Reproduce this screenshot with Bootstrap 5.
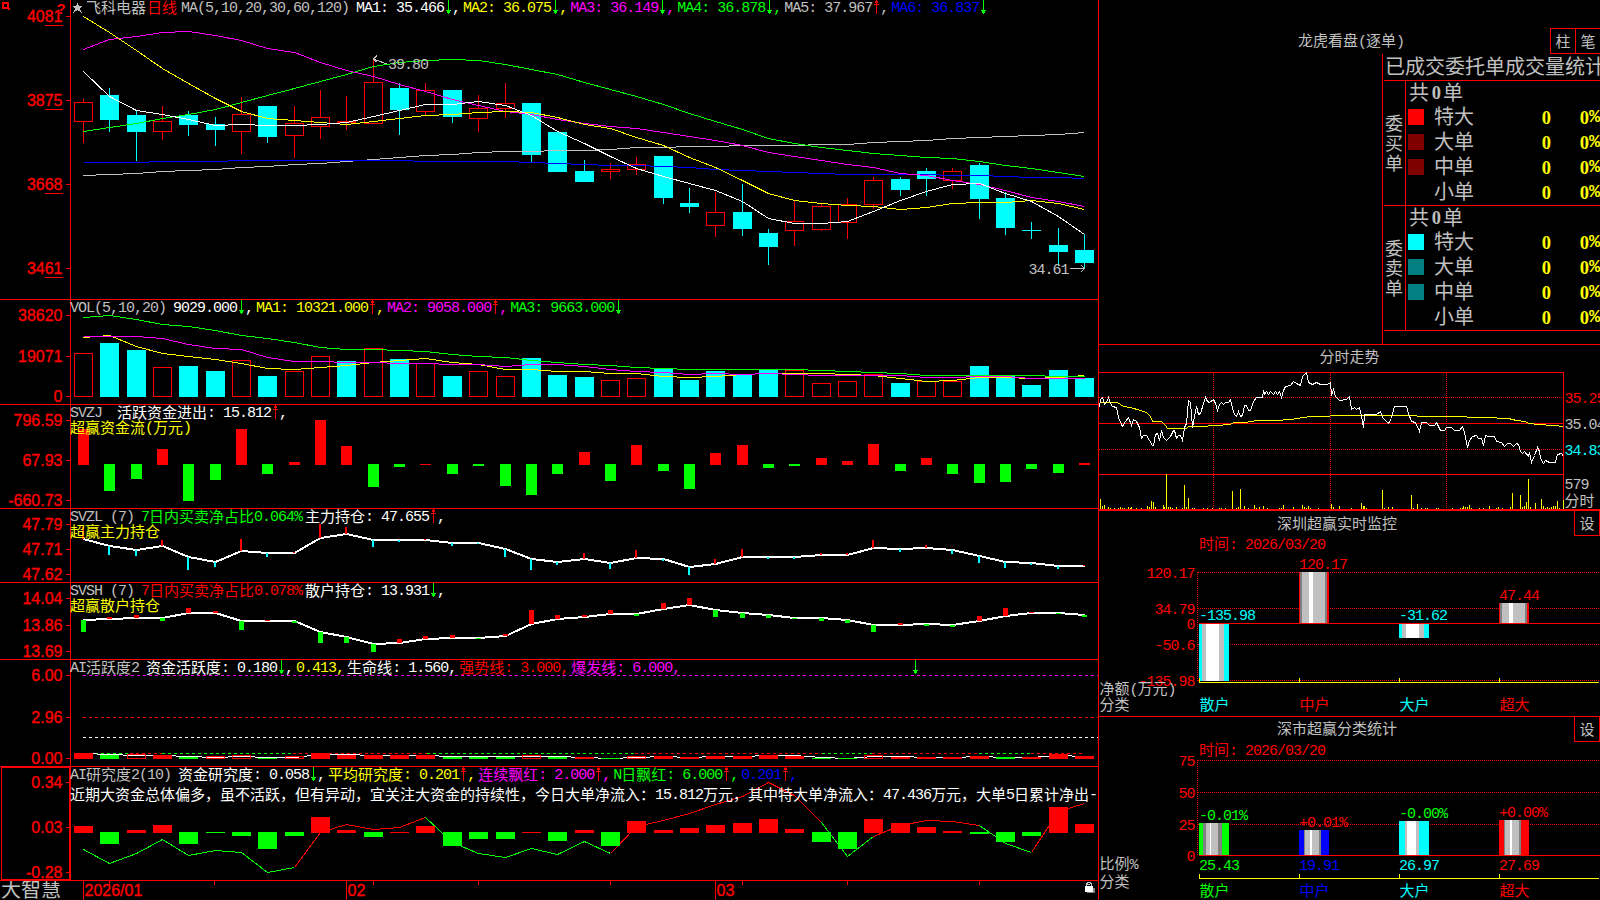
<!DOCTYPE html>
<html lang="zh-CN">
<head>
    <meta charset="UTF-8">
    <title>飞科电器 日线 - 大智慧</title>
    <link href="https://cdn.jsdelivr.net/npm/bootstrap@5.3.2/dist/css/bootstrap.min.css" rel="stylesheet">

    <style>
        :root {
            --r: #ff0000;
            --gy: #c0c0c0;
        }
        body {
            width: 1600px;
            height: 900px;
            overflow: hidden;
            background: #000;
            color: var(--gy);
            font: 15px/15px "Liberation Mono", "Noto Sans CJK SC", monospace;
            letter-spacing: -1px;
        }
        svg { display: block; overflow: hidden; shape-rendering: crispEdges; }
        svg text { white-space: pre; }
        .zh { font-family: "Noto Sans CJK SC", sans-serif; font-weight: 400; letter-spacing: 0; }
        .left-col { width: 1099px; border-right: 1px solid var(--r); }
        .right-col { width: 501px; }
        .pane { border-bottom: 1px solid var(--r); }
        .pane > svg { width: 100%; height: 100%; }

        /* alturas de cada panel */
        .h-k { height: 300px; }
        .h-vol { height: 105px; }
        .h-zj { height: 104px; }
        .h-zl { height: 74px; }
        .h-sh { height: 77px; }
        .h-act { height: 107px; }
        .h-res { height: 114px; }
        .h-date { height: 19px; }
        .h-order { height: 345px; }
        .h-tick { height: 166px; border-bottom-width: 2px; }
        .h-mon { height: 206px; }
        .h-stat { height: 183px; border-bottom: 0; }

        .legend { left: 70px; top: 1px; height: 15px; white-space: pre; }
        .legend.second { top: 16px; }
        .legend.note { top: 21px; width: 1027px; overflow-x: clip; overflow-y: visible; }
        .legend > span { display: flex; margin-right: 3px; height: 15px; line-height: 15px; }
        .legend > .ttl { margin-right: 7px; }
        .legend .zh, .box-btn .zh { line-height: 15px; margin-top: -2px; }
        .arw { width: 8px; height: 15px; flex: none; margin-top: -1px; }
        .star { margin: -1px 3px 0 2px; flex: none; }

        .c-w { color: #fff; }
        .c-y { color: #ff0; }
        .c-m { color: #f0f; }
        .c-g { color: #0f0; }
        .c-b { color: #00f; }
        .c-r { color: #f00; }
        .c-gy { color: var(--gy); }

        .ax { font: 16px "Liberation Sans", sans-serif; letter-spacing: 0; fill: #f00; stroke: #f00; stroke-width: .35px; }

        .box-btn { width: 26px; height: 25px; border: 1px solid var(--r); border-top: 0; }

        .order-head { height: 54px; }
        .order-head .caption-txt { margin-left: 199px; padding-bottom: 4px; width: 252px; }
        .order-head .box-btn { height: 26px; border-top: 1px solid var(--r); border-right: 0; width: 25px; }
        .order-body { margin-left: 283px; border-left: 1px solid var(--r); padding-left: 1px; }
        .order-body .zh { font-size: 20px; letter-spacing: 0; margin-top: -4px; }
        .order-title { height: 26px; padding-left: 1px; white-space: nowrap; overflow-x: clip; }
        .order-block { height: 125px; border-top: 1px solid var(--r); }
        .side-lbl { width: 21px; padding-bottom: 3px; }
        .side-lbl .zh { font-size: 18px; line-height: 20px; display: block; width: 20px; margin-top: 0; }
        .order-rows { border-left: 1px solid var(--r); padding-left: 2px; }
        .order-row { height: 25px; }
        .order-row.sum { height: 24px; padding-left: 1px; }
        .swatch { width: 16px; height: 16px; margin: -2px 10px 0 0; }
        .order-row .dig { font: bold 18.5px/20px "Liberation Serif", serif; letter-spacing: 0; }
        .order-row .sum-n { width: 14px; text-align: right; padding-right: 2px; }
        .order-row .name { width: 92px; }
        .order-row .num { width: 25px; text-align: right; color: #ff0; }
        .order-row .pct { width: 38px; text-align: right; color: #ff0; }
        .order-row .sign { font-size: 18.5px; line-height: 20px; color: #ff0; font-weight: 700; letter-spacing: 0; }
    </style>
</head>
<body class="d-flex">

<svg width="0" height="0" class="position-absolute">
    <defs>
        <symbol id="dn" viewBox="0 0 8 15"><path d="M4.5 0V14M2 10.5H7M3 11.5H6M3 12.5H6" stroke="#0f0" fill="none"/></symbol>
        <symbol id="up" viewBox="0 0 8 15"><path d="M4.5 0V14M3 1.5H6M3 2.5H6M2 4.5H7" stroke="#f00" fill="none"/></symbol>
    </defs>
</svg>

<!-- Columna izquierda: K线 e indicadores -->
<div class="left-col d-flex flex-column">
    <section class="pane h-k position-relative">
        <svg id="kline" viewBox="0 0 1098 299"></svg>
        <div class="legend position-absolute d-flex">
            <span class="mix"><svg class="star" width="11" height="15" viewBox="0 0 11 15"><path d="M5.500 2.500L7 6L11 6L8 8.500L9.500 12.500L5.500 10L1.500 12.500L3 8.500L0 6L4 6Z" fill="#c0c0c0"/></svg>飞科电器</span>
            <span class="mix c-r" style="margin-left:-2px;margin-right:4px">日线</span>
            <span class="mix ttl">MA(5,10,20,30,60,120)</span>
            <span class="mix c-w">MA1: 35.466<svg class="arw"><use href="#dn"/></svg>,</span>
            <span class="mix c-y">MA2: 36.075<svg class="arw"><use href="#dn"/></svg>,</span>
            <span class="mix c-m">MA3: 36.149<svg class="arw"><use href="#dn"/></svg>,</span>
            <span class="mix c-g">MA4: 36.878<svg class="arw"><use href="#dn"/></svg>,</span>
            <span class="mix c-gy">MA5: 37.967<svg class="arw"><use href="#up"/></svg>,</span>
            <span class="mix c-b">MA6: 36.837<svg class="arw"><use href="#dn"/></svg></span>
        </div>
    </section>
    <section class="pane h-vol position-relative">
        <svg id="vol" viewBox="0 300 1098 104"></svg>
        <div class="legend position-absolute d-flex">
            <span class="mix ttl">VOL(5,10,20)</span>
            <span class="mix c-w">9029.000<svg class="arw"><use href="#dn"/></svg>,</span>
            <span class="mix c-y">MA1: 10321.000<svg class="arw"><use href="#up"/></svg>,</span>
            <span class="mix c-m">MA2: 9058.000<svg class="arw"><use href="#up"/></svg>,</span>
            <span class="mix c-g">MA3: 9663.000<svg class="arw"><use href="#dn"/></svg></span>
        </div>
    </section>
    <section class="pane h-zj position-relative">
        <svg id="zj" viewBox="0 405 1098 103"></svg>
        <div class="legend position-absolute d-flex">
            <span class="mix ttl">SVZJ </span>
            <span class="mix c-w">活跃资金进出: 15.812<svg class="arw"><use href="#up"/></svg>,</span>
        </div>
        <div class="legend second position-absolute d-flex"><span class="mix c-y">超赢资金流(万元)</span></div>
    </section>
    <section class="pane h-zl position-relative">
        <svg id="zl" viewBox="0 509 1098 73"></svg>
        <div class="legend position-absolute d-flex">
            <span class="mix ttl">SVZL (7)</span>
            <span class="mix c-g">7日内买卖净占比0.064%</span>
            <span class="mix c-w">主力持仓: 47.655<svg class="arw"><use href="#up"/></svg>,</span>
        </div>
        <div class="legend second position-absolute d-flex"><span class="mix c-y">超赢主力持仓</span></div>
    </section>
    <section class="pane h-sh position-relative">
        <svg id="sh" viewBox="0 583 1098 76"></svg>
        <div class="legend position-absolute d-flex">
            <span class="mix ttl">SVSH (7)</span>
            <span class="mix c-r">7日内买卖净占比0.078%</span>
            <span class="mix c-w">散户持仓: 13.931<svg class="arw"><use href="#dn"/></svg>,</span>
        </div>
        <div class="legend second position-absolute d-flex"><span class="mix c-y">超赢散户持仓</span></div>
    </section>
    <section class="pane h-act position-relative">
        <svg id="act" viewBox="0 660 1098 106"></svg>
        <div class="legend position-absolute d-flex">
            <span class="mix ttl">AI活跃度2</span>
            <span class="mix c-w">资金活跃度: 0.180<svg class="arw"><use href="#dn"/></svg>,</span>
            <span class="mix c-y">0.413,</span>
            <span class="mix c-w">生命线: 1.560,</span>
            <span class="mix c-r">强势线: 3.000,</span>
            <span class="mix c-m">爆发线: 6.000,</span>
        </div>
    </section>
    <section class="pane h-res position-relative">
        <svg id="res" viewBox="0 767 1098 113"></svg>
        <div class="legend position-absolute d-flex">
            <span class="mix ttl">AI研究度2(10)</span>
            <span class="mix c-w">资金研究度: 0.058<svg class="arw"><use href="#dn"/></svg>,</span>
            <span class="mix c-y">平均研究度: 0.201<svg class="arw"><use href="#up"/></svg>,</span>
            <span class="mix c-m">连续飘红: 2.000<svg class="arw"><use href="#up"/></svg>,</span>
            <span class="mix c-g">N日飘红: 6.000<svg class="arw"><use href="#up"/></svg>,</span>
            <span class="mix c-b">0.201<svg class="arw"><use href="#up"/></svg>,</span>
        </div>
        <div class="legend note position-absolute d-flex"><span class="mix c-w">近期大资金总体偏多，虽不活跃，但有异动，宜关注大资金的持续性，今日大单净流入：15.812万元，其中特大单净流入：47.436万元，大单5日累计净出-</span></div>
    </section>
    <svg id="dates" class="h-date" width="1098" viewBox="0 881 1098 19"></svg>
</div>

<!-- Columna derecha -->
<div class="right-col d-flex flex-column">
    <section class="pane h-order d-flex flex-column">
        <div class="order-head d-flex align-items-end">
            <div class="caption-txt mix">龙虎看盘(逐单)</div>
            <div class="box-btn mix d-flex align-items-center justify-content-center">柱</div>
            <div class="box-btn mix d-flex align-items-center justify-content-center">笔</div>
        </div>
        <div class="order-body flex-grow-1 d-flex flex-column">
            <div class="order-title mix d-flex align-items-center">已成交委托单成交量统计</div>
            <div id="orders"></div>
            <div class="border-top border-danger" style="border-color:#f00!important"></div>
        </div>
    </section>
    <section class="pane h-tick">
        <svg id="tick" viewBox="1099 345 501 164"></svg>
    </section>
    <section class="pane h-mon position-relative">
        <svg id="mon" viewBox="1099 511 501 205"></svg>
        <div class="box-btn mix position-absolute top-0 end-0 d-flex align-items-center justify-content-center">设</div>
    </section>
    <section class="pane h-stat position-relative">
        <svg id="stat" viewBox="1099 717 501 183"></svg>
        <div class="box-btn mix position-absolute top-0 end-0 d-flex align-items-center justify-content-center">设</div>
    </section>
</div>

<script src="https://cdn.jsdelivr.net/npm/bootstrap@5.3.2/dist/js/bootstrap.bundle.min.js"></script>
<script>
const R = '#f00', G = '#0f0', C = '#0ff', W = '#fff', Y = '#ff0', M = '#f0f', B = '#00f', GY = '#c0c0c0';
const zhRe = /([\u3000-\u9fff\uff00-\uffef]+)/;

// Envolver los tramos en chino para darles su propia fuente
function splitZh(str, tag) {
    return str.split(zhRe).map(s => zhRe.test(s) ? `<${tag} class="zh">${s}</${tag}>` : s).join('');
}
document.querySelectorAll('.mix').forEach(el => {
    [...el.childNodes].filter(n => n.nodeType === 3).forEach(n => {
        const span = document.createElement('span');
        span.innerHTML = splitZh(n.textContent, 'span');
        n.replaceWith(...span.childNodes);
    });
});

// Primitivas de dibujo
const rect = (x, y, w, h, c) => `<rect x="${x}" y="${y}" width="${w}" height="${h}" fill="${c}"/>`;
const box = (x, y, w, h, c) => `<rect x="${x + .5}" y="${y + .5}" width="${w - 1}" height="${h - 1}" fill="#000" stroke="${c}"/>`;
const hline = (x1, x2, y, c) => rect(x1, y, x2 - x1, 1, c);
const vline = (x, y1, y2, c) => rect(x, y1, 1, y2 - y1, c);
const dash = (x1, y1, x2, y2, c, d) => `<line x1="${x1}" y1="${y1}" x2="${x2}" y2="${y2}" stroke="${c}" stroke-dasharray="${d}"/>`;
const poly = (pts, c, w = 1) => `<polyline points="${pts.map(p => p.join(',')).join(' ')}" fill="none" stroke="${c}" stroke-width="${w}"/>`;
const label = (x, cy, s, c, anchor = 'start') =>
    `<text x="${x}" y="${cy + 5}" fill="${c}" text-anchor="${anchor}">${splitZh(s, 'tspan')}</text>`;
const draw = (id, parts) => { document.getElementById(id).innerHTML = parts.join(''); };

// Las series están en tercios de píxel desde la base de cada panel
const cx = i => 83 + Math.round(i * 26.345);
const yy = (base, v) => base + Math.floor(v / 3);
const series = (base, arr, c, w = 1, from = 0) =>
    poly(arr.map((v, k) => [cx(k + from) + .5, yy(base, v) + .5]), c, w);

function axis(top, bottom, ticks) {
    let out = vline(70, top, bottom, R);
    ticks.forEach(([s, y]) => {
        out += hline(66, 70, y, R);
        out += `<text class="ax" x="62.500" y="${y + 6}" text-anchor="end">${s}</text>`;
    });
    return out;
}

// ---- K线 ----
const candles = [
    ['R',307,365,297,430],['C',285,360,264,396],['C',345,396,332,483],['R',364,395,318,420],['C',345,375,333,408],
    ['C',372,390,351,438],['R',343,395,291,462],['C',318,411,318,429],['R',370,409,318,474],['R',352,380,270,417],
    ['R',364,370,288,390],['R',247,371,177,371],['C',264,330,249,405],['R',271,335,249,345],['C',270,351,270,369],
    ['R',325,356,285,396],['R',310,326,249,354],['C',309,465,309,487],['C',396,516,396,516],['C',513,546,480,546],
    ['R',507,515,489,537],['R',492,509,471,525],['C',468,594,468,612],['C',609,621,564,639],['R',637,677,576,711],
    ['C',636,687,552,708],['C',699,741,687,795],['R',664,692,602,738],['R',619,689,611,693],['R',613,668,594,717],
    ['R',541,614,531,627],['C',537,570,531,588],['C',513,537,504,588],['R',514,542,504,567],['C',495,597,489,657],
    ['C',594,684,576,705],['C',690,693,666,717],['C',735,756,684,798],['C',750,789,702,806]
];
const ma = [
    [GY, [527,523,520,515,511,507,502,499,494,489,484,478,472,467,463,458,455,454,452,451,448,443,442,439,438,436,436,436,434,433,427,424,420,415,412,409,406,403,398]],
    [B, [487,487,487,485,485,484,482,482,482,482,482,482,482,484,485,485,485,487,490,493,496,496,499,503,507,512,514,517,520,522,523,523,523,526,526,529,532,533,535]],
    [G, [395,382,370,355,343,327,307,286,265,244,222,200,188,180,178,182,194,208,223,248,268,289,314,340,364,387,415,431,442,452,460,466,472,476,485,495,505,516,529]],
    [M, [149,118,108,98,95,105,121,145,157,187,212,230,253,273,298,317,334,344,359,371,379,386,398,408,420,435,457,470,481,492,502,520,527,541,553,572,592,604,619]],
    [Y, [49,97,150,205,250,295,334,354,361,367,373,364,354,346,342,337,333,338,352,373,386,412,436,471,502,540,580,601,610,615,620,628,622,610,606,606,601,610,628]],
    [W, [214,290,331,343,357,376,374,376,377,374,367,349,331,314,313,304,316,345,393,430,468,505,530,550,571,605,655,670,670,664,633,600,573,554,550,580,604,650,702]]
];
const k = [];
candles.forEach(([t, a, b, hi, lo], i) => {
    const x = cx(i), top = yy(0, a), bot = Math.round(b / 3);
    const col = t === 'R' ? R : C;
    k.push(vline(x, yy(0, hi), Math.round(lo / 3), col));
    k.push(t === 'R' ? box(x - 9, top, 19, Math.max(bot - top, 2), col) : rect(x - 9, top, 19, bot - top, col));
});
ma.forEach(([c, arr]) => k.push(series(0, arr, c)));
k.push(axis(0, 299, [['4081', 16], ['3875', 100], ['3668', 184], ['3461', 268]]));
[25, 109, 193, 277].forEach(y => k.push(hline(45, 63, y, R)));
k.push(`<text x="56.500" y="14" fill="${R}" style="font:bold 15px 'Liberation Sans',sans-serif">?</text>`);
k.push(`<rect x="3" y="3" width="5" height="5" fill="none" stroke="${R}" stroke-width="2"/>` + rect(8, 8, 2, 2, R));
k.push(poly([[377, 55.5], [373.5, 59], [376.5, 62]], GY), poly([[373.5, 59], [387, 64]], GY), label(388, 63.5, '39.80', GY));
k.push(label(1028.5, 268.5, '34.61', GY), poly([[1070, 268.5], [1084, 268.5]], GY), poly([[1081, 265], [1084.5, 268.5], [1081, 272]], GY));
draw('kline', k);

// ---- VOL ----
const volBars = 'R190 C159 C180 R232 C228 C243 R211 C258 R244 R199 C213 R175 C208 R220 C258 R244 R259 C204 C255 C261 R271 R265 C237 C270 C243 C255 C238 R241 R280 R274 R253 C279 R274 R274 C228 C257 C285 C240 C264'.split(' ');
const v = volBars.map((s, i) => {
    const top = yy(290, +s.slice(1));
    return (s[0] === 'R' ? box : rect)(cx(i) - 9, top, 19, 397 - top, s[0] === 'R' ? R : C);
});
v.push(series(290, [142,136,169,189,199,209,220,234,238,232,226,217,210,205,216,224,238,238,243,244,250,250,258,262,258,253,250,250,250,254,256,264,274,271,262,262,264,261,256], Y));
v.push(series(290, [139,139,140,145,162,174,179,202,213,215,217,217,220,220,223,223,229,223,224,229,237,244,247,253,250,253,250,253,256,256,256,256,262,262,259,259,264,265,265], M));
v.push(series(290, [82,76,88,102,109,121,136,145,157,172,178,177,181,184,192,199,202,211,217,223,227,233,235,238,238,238,238,238,241,244,247,250,255,256,256,256,256,258,259], G));
v.push(axis(300, 404, [['38620', 315], ['19071', 356], ['0', 396]]));
draw('vol', v);

// Barras arriba/abajo de una línea de cero
function updown(list, base, zero, w) {
    return list.split(' ').map((s, i) => {
        const y = base + Math.round(+s.slice(1) / 3), x = cx(i) - (w - 1) / 2;
        return s[0] === 'R' ? rect(x, y, w, zero + 1 - y, R) : rect(x, zero, w, y - zero, G);
    });
}

// ---- SVZJ ----
draw('zj', [
    ...updown('R417 G603 G567 R477 G633 G570 R417 G552 R516 R390 R468 G591 G531 R522 G552 G528 G588 G615 G552 R486 G573 R465 G543 G597 R489 R465 G534 G528 R504 R513 R462 G543 R504 G552 G579 G576 G537 G549 R519', 290, 464, 11),
    axis(405, 508, [['796.59', 420], ['67.93', 460], ['-660.73', 500]])
]);

// Línea gruesa con palitos en cada punto
function sticks(line, list, base, w, down) {
    return list.split(' ').map((s, i) => {
        const y0 = base + Math.round(line[i] / 3), y1 = base + Math.round(+s.slice(1) / 3), x = cx(i) - (w >> 1);
        return s[0] === 'R' ? rect(x, y1, w, Math.max(y0 - y1, 1), R) : rect(x, y0, w, Math.max(y1 - y0, 1), down);
    });
}
const thick = (base, arr) => poly(arr.map((q, i) => [cx(i) + .5, base + Math.round(q / 3)]), W, 2);

// ---- SVZL ----
const zl = [746,769,780,767,802,816,782,790,788,744,731,749,750,751,759,760,778,808,817,806,820,803,806,831,821,800,800,800,796,795,773,777,773,779,799,815,819,828,828];
draw('zl', [
    thick(290, zl),
    ...sticks(zl, 'R710 C795 C798 R750 C840 C831 R747 C801 R786 R702 R711 C771 C755 R748 C768 C762 C801 C840 C825 R789 C837 R780 C812 C855 R807 R777 C807 C807 R789 R789 R750 C786 R765 C792 C819 C834 C825 C837 R825', 290, 2, C),
    axis(509, 582, [['47.79', 524], ['47.71', 549], ['47.62', 574]])
]);

// ---- SVSH ----
const sh = [135,132,128,129,114,113,138,138,138,172,187,208,203,193,188,189,184,146,133,127,116,118,103,89,106,115,121,128,130,136,150,149,147,150,138,122,115,113,121];
draw('sh', [
    thick(575, sh),
    ...sticks(sh, 'G171 R126 R120 G138 R99 R108 G165 R135 G144 G204 G204 G231 R192 R183 R180 G192 R177 R105 R120 R120 R105 G123 R84 R69 G126 G129 G129 G132 G138 G144 G171 R144 G153 G156 R123 R99 R111 G117 G126', 575, 5, G),
    axis(583, 659, [['14.04', 598], ['13.86', 625], ['13.69', 651]])
]);

// ---- AI活跃度 ----
const actBars = 'R534 G540 H538 R540 G546 H544 H541 G549 H544 R534 R540 R541 R541 R540 G546 G546 G546 H541 G546 R546 G549 H544 R543 R546 R543 R543 R540 R543 G549 G549 H541 R546 R546 R546 R543 G546 R546 R537 R543'.split(' ');
const act = [dash(83, 675.5, 1098, 675.5, M, '3 3'), dash(83, 717.5, 1098, 717.5, R, '3 3'), dash(83, 737.5, 1098, 737.5, W, '3 3')];
[[95, 130, G], [130, 162, R], [162, 293, G], [293, 427, R], [427, 635, G], [635, 822, R], [822, 872, G], [872, 979, R], [979, 1031, G], [1031, 1084, R]]
    .forEach(([a, b, c]) => act.push(dash(a, 753.5, b, 753.5, c, '3 3')));
act.push(series(575, [536,538,541,540,545,546,543,546,548,538,539,541,541,542,544,545,543,545,545,548,550,546,543,546,543,545,541,541,548,550,545,544,547,547,544,546,546,541,543], W));
actBars.forEach((s, i) => {
    const y = yy(575, +s.slice(1));
    act.push(s[0] === 'H'
        ? `<rect x="${cx(i) - 8.5}" y="${y + .5}" width="18" height="${758 - y}" fill="none" stroke="${R}"/>`
        : rect(cx(i) - 9, y, 19, 759 - y, s[0] === 'R' ? R : G));
});
act.push(`<use href="#dn" x="911" y="660" width="8" height="15"/>`);
act.push(axis(660, 766, [['6.00', 675], ['2.96', 717], ['0.00', 758]]));
draw('act', act);

// ---- AI研究度 ----
const resLine = [823,865,834,794,841,825,832,891,878,772,748,763,757,727,803,835,847,820,838,798,836,755,737,715,689,664,622,660,742,844,783,750,737,738,751,805,832,708,686];
draw('res', [
    ...[[0, 8, G], [8, 13, R], [13, 20, G], [20, 28, R], [28, 30, G], [30, 34, R], [34, 36, G], [36, 38, R]]
        .map(([a, b, c]) => series(575, resLine.slice(a, b + 1), c, 1, a)),
    ...updown('R753 G807 R765 R750 G807 G774 G783 G822 G783 R726 R765 G786 R771 R753 G813 G792 G792 R771 G798 R765 G813 R738 R765 R759 R750 R744 R732 R762 G801 G822 R732 R744 R756 R768 G777 G801 G783 R696 R747', 575, 832, 19),
    axis(767, 880, [['0.34', 782], ['0.03', 827], ['-0.28', 872]]),
    `<rect x="1.500" y="767.500" width="68" height="112" fill="none" stroke="${R}"/>`
]);

// ---- Fechas ----
const big = (x, s) => `<text class="ax" x="${x}" y="896">${s}</text>`;
draw('dates', [
    `<text class="zh" x="1" y="897" fill="${GY}" style="font-size:20px">大智慧</text>`,
    ...[83, 346, 715].map(x => vline(x, 881, 900, R)),
    ...[109, 214, 373, 478, 610, 742, 847, 979].map(x => vline(x, 881, 885, R)),
    big(84.5, '2026/01'), big(347.5, '02'), big(716.5, '03'),
    rect(1087, 888, 8, 5, '#808080'), rect(1085, 886, 8, 6, W), rect(1087, 884, 3, 1, GY),
    `<path d="M1086.500 886V883.500H1087.500V882.500H1090.500V883.500H1091.500V886" fill="none" stroke="${GY}"/>`
]);

// ---- 委托单 ----
const blocks = [['委买单', ['#f00', '#800000', '#800000', '#000']], ['委卖单', ['#0ff', '#008080', '#008080', '#000']]];
document.getElementById('orders').innerHTML = blocks.map(([side, cols]) => `
    <div class="order-block d-flex">
        <div class="side-lbl d-flex flex-column justify-content-center text-center">${[...side].map(c => `<span class="zh">${c}</span>`).join('')}</div>
        <div class="order-rows flex-grow-1">
            <div class="order-row sum d-flex align-items-center"><span class="zh">共</span><span class="dig sum-n">0</span><span class="zh">单</span></div>
            ${['特大', '大单', '中单', '小单'].map((n, i) => `
            <div class="order-row d-flex align-items-center">
                <div class="swatch" style="background:${cols[i]}"></div>
                <div class="name zh">${n}</div><div class="num dig">0</div><div class="pct dig">0</div><div class="sign">%</div>
            </div>`).join('')}
        </div>
    </div>`).join('');

// ---- 分时走势 ----
const toPts = (s, bx, by) => s.split(' ').map(p => p.split(',').map(Number)).map(([a, b]) => [bx + Math.floor(a / 3) + .5, by + Math.floor(b / 3) + .5]);
const price = '28,203 31,178 37,172 43,193 49,188 55,172 61,190 68,200 79,203 85,232 97,259 106,245 115,233 124,256 130,238 139,245 148,262 154,295 160,287 169,287 178,300 187,317 191,317 196,283 202,280 209,300 214,272 220,292 229,300 241,290 250,270 253,272 259,295 265,287 271,287 277,300 283,262 289,250 295,181 301,186 307,262 313,228 320,199 326,222 332,220 340,190 346,173 352,184 358,186 370,178 376,190 382,210 388,192 394,188 400,193 406,187 414,187 422,178 427,205 433,222 440,229 446,215 452,229 458,226 464,195 470,196 476,211 482,210 490,184 498,173 517,172 520,152 524,163 529,155 535,162 542,154 550,162 556,155 562,162 567,154 574,173 580,150 586,139 600,137 611,124 620,130 631,136 637,110 649,97 655,128 668,133 680,128 692,132 712,132 720,127 724,165 730,148 736,168 748,180 770,179 779,170 785,208 793,203 800,208 808,203 814,230 820,262 824,224 860,223 870,214 878,232 896,250 904,236 914,200 950,200 956,220 964,245 976,246 988,274 995,248 1008,248 1018,256 1032,256 1040,248 1051,271 1062,272 1070,262 1084,262 1094,271 1108,270 1117,260 1124,278 1132,321 1138,300 1148,290 1158,287 1164,295 1174,295 1180,316 1186,287 1196,290 1214,290 1220,303 1234,308 1243,318 1252,310 1262,310 1270,318 1280,310 1286,312 1291,334 1298,341 1304,334 1314,350 1318,338 1325,366 1332,345 1343,322 1349,334 1352,355 1360,370 1366,362 1378,367 1396,367 1402,342 1414,341 1419,350';
const avg = '28,187 83,187 100,198 120,202 150,211 170,217 180,228 188,243 215,245 225,255 231,265 288,265 295,260 335,258 375,255 420,252 430,248 465,246 500,241 560,240 600,237 640,232 665,229 715,229 725,226 975,226 985,229 1125,229 1135,232 1215,232 1225,235 1255,236 1280,240 1305,243 1315,250 1345,254 1390,257 1419,260';
const tv = '31:477 37:498 43:495 55:501 61:504 73:504 85:504 91:501 97:504 103:504 115:501 121:504 124:501 139:504 154:504 172:498 178:501 184:483 190:486 196:501 220:495 223:501 229:403 235:501 241:501 247:504 259:501 277:504 283:435 289:501 295:474 307:504 313:504 340:504 352:504 367:504 388:504 394:504 406:504 427:453 439:504 445:501 451:447 463:498 475:504 493:495 499:504 508:501 520:498 532:504 568:504 574:504 580:495 610:501 637:495 643:501 649:504 655:498 661:504 685:504 724:492 730:501 748:498 784:504 814:489 820:498 823:498 829:504 877:450 883:504 895:501 907:501 964:465 970:504 982:492 994:504 1006:504 1012:504 1039:504 1045:504 1087:504 1111:504 1117:504 1120:498 1126:501 1132:501 1138:495 1144:504 1168:504 1180:504 1198:498 1219:504 1225:501 1237:504 1261:501 1267:459 1291:465 1297:501 1303:498 1309:486 1315:417 1321:501 1336:489 1354:477 1360:498 1366:504 1372:501 1378:504 1384:501 1390:498 1396:498 1402:483 1408:504 1420:480';
draw('tick', [
    label(1319.5, 357, '分时走势', GY),
    hline(1099, 1564, 372, R), hline(1099, 1563, 423, R), hline(1099, 1564, 474, R), vline(1563, 372, 509, R),
    dash(1099, 397.5, 1563, 397.5, R, '1 1'), dash(1099, 449.5, 1563, 449.5, R, '1 1'),
    ...[1213.5, 1330.5, 1446.5].map(x => dash(x, 373, x, 509, R, '1 1')),
    ...tv.split(' ').map(s => s.split(':').map(Number)).map(([a, b]) => vline(1090 + Math.floor(a / 3), yy(340, b), 509, Y)),
    poly(toPts(avg, 1090, 340), Y), poly(toPts(price, 1090, 340), W),
    label(1564.5, 398, '35.25', R), label(1564.5, 424, '35.04', GY), label(1564.5, 450, '34.83', C),
    label(1564.5, 484, '579', GY), label(1564.5, 501, '分时', GY)
]);

// ---- 深圳超赢 / 深市超赢 ----
// cada barra: x, y, alto y franjas [ancho, color] en tercios
function bar(x, y, h, strips) {
    let off = 0;
    return strips.map(([w, c]) => { const o = rect(x + off, y, w / 3, h, c); off += w / 3; return o; }).join('');
}
const GR = '#808080';
const cols = [1199, 1299, 1399, 1499];
const yAxis = y => hline(1199, 1599, y, Y) + cols.map(x => vline(x, y - 4, y, Y)).join('');
const grid = y => dash(1198, y + .5, 1600, y + .5, R, '1 1');
const cyanBar = [[9, C], [12, GY], [39, W], [15, GY], [15, C]];
const redBar = [[3, R], [6, GR], [21, GY], [12, W], [36, GY], [6, GR], [6, R]];
draw('mon', [
    label(1277, 523.5, '深圳超赢实时监控', GY), label(1199, 543.5, '时间: 2026/03/20', R),
    ...[572, 608, 644, 680].map(grid), dash(1197.5, 572, 1197.5, 682, R, '1 1'),
    ...[['120.17', 573], ['34.79', 609], ['0', 624], ['-50.6', 645], ['-135.98', 681]].map(([s, y]) => label(1194.5, y, s, R, 'end')),
    bar(1199, 624, 57, cyanBar), bar(1299, 572, 51, redBar), bar(1399, 624, 14, cyanBar), bar(1499, 603, 20, redBar),
    hline(1199, 1600, 623, R), yAxis(682),
    label(1199, 615, '-135.98', C), label(1299, 564, '120.17', R), label(1399, 615, '-31.62', C), label(1499, 595, '47.44', R),
    label(1099.5, 689, '净额(万元)', GY), label(1099.5, 705, '分类', GY),
    ...[['散户', C], ['中户', R], ['大户', C], ['超大', R]].map(([s, c], i) => label(cols[i] + .5, 705, s, c))
]);
draw('stat', [
    label(1277, 729, '深市超赢分类统计', GY), label(1199, 749.5, '时间: 2026/03/20', R),
    ...[760, 792, 824].map(grid), dash(1197.5, 760, 1197.5, 855, R, '1 1'),
    ...[['75', 761], ['50', 793], ['25', 825], ['0', 856]].map(([s, y]) => label(1194.5, y, s, R, 'end')),
    bar(1199, 823, 32, [[12, G], [9, GR], [12, GY], [3, W], [21, GY], [12, GR], [21, G]]),
    bar(1299, 830, 25, [[15, B], [3, GR], [15, GY], [6, W], [21, GY], [6, GR], [24, B]]),
    bar(1399, 821, 34, [[18, C], [6, GY], [27, W], [9, GY], [30, C]]),
    bar(1499, 820, 35, [[15, R], [3, GR], [15, GY], [6, W], [21, GY], [6, GR], [24, R]]),
    hline(1199, 1600, 855, R), yAxis(878),
    label(1199, 815, '-0.01%', G), label(1299, 822, '+0.01%', R), label(1399, 813, '-0.00%', G), label(1499, 812, '+0.00%', R),
    label(1099.5, 864, '比例%', GY), label(1099.5, 882, '分类', GY),
    ...[['散户', '25.43', G], ['中户', '19.91', B], ['大户', '26.97', C], ['超大', '27.69', R]]
        .map(([s, n, c], i) => label(cols[i], 865, n, c) + label(cols[i] + .5, 891, s, c))
]);
</script>
</body>
</html>
